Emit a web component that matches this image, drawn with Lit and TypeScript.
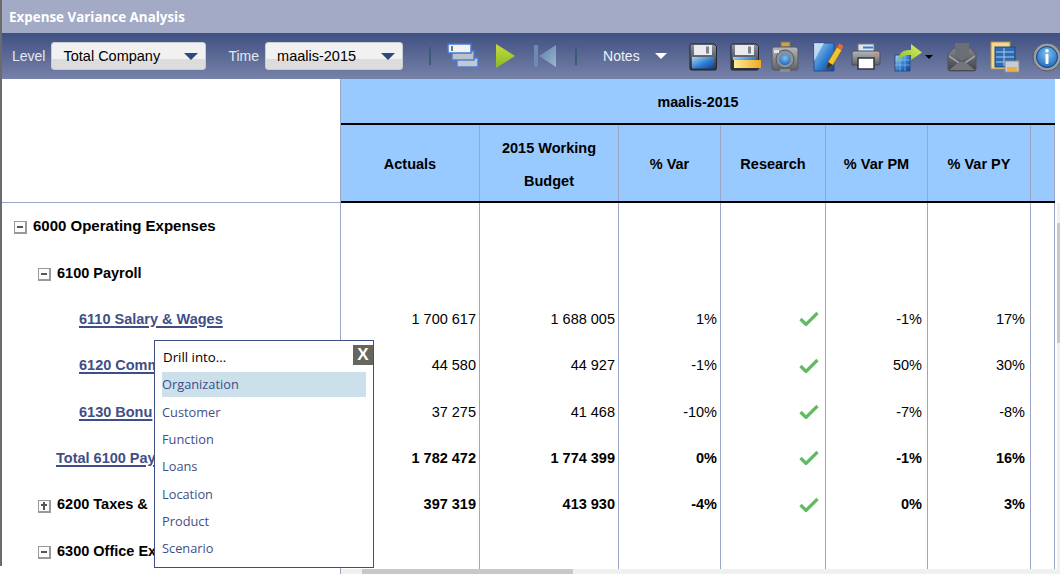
import { LitElement, html, css } from "lit";
import { customElement } from "lit/decorators.js";

const defs = html`<svg width="0" height="0" class="defs"><defs>
  <linearGradient id="gSave" x1="0" y1="0" x2="0" y2="1"><stop offset="0" stop-color="#8d93a3"/><stop offset="1" stop-color="#2c3038"/></linearGradient>
  <linearGradient id="gBlue" x1="0" y1="0" x2="1" y2="1"><stop offset="0" stop-color="#a9d4f2"/><stop offset=".55" stop-color="#2f7fd0"/><stop offset="1" stop-color="#0f3f96"/></linearGradient>
  <linearGradient id="gPlay" x1="0" y1="0" x2="0" y2="1"><stop offset="0" stop-color="#c6dc3a"/><stop offset="1" stop-color="#86b92a"/></linearGradient>
  <linearGradient id="gFirst" x1="0" y1="0" x2="1" y2="1"><stop offset="0" stop-color="#5d7ca4"/><stop offset="1" stop-color="#9ab9d6"/></linearGradient>
  <linearGradient id="gGrey" x1="0" y1="0" x2="0" y2="1"><stop offset="0" stop-color="#b5b8bf"/><stop offset="1" stop-color="#5e6068"/></linearGradient>
  <linearGradient id="gMail" x1="0" y1="0" x2="0" y2="1"><stop offset="0" stop-color="#85878e"/><stop offset="1" stop-color="#3d3f47"/></linearGradient>
  <linearGradient id="gArrow" x1="0" y1="1" x2="1" y2="0"><stop offset="0" stop-color="#7fbf3a"/><stop offset="1" stop-color="#e6ef58"/></linearGradient>
  <linearGradient id="gYellow" x1="0" y1="0" x2="1" y2="0"><stop offset="0" stop-color="#fff3a8"/><stop offset="1" stop-color="#f0a81e"/></linearGradient>
  <radialGradient id="gInfo" cx=".5" cy=".35" r=".7"><stop offset="0" stop-color="#7cc3f2"/><stop offset="1" stop-color="#1c63b8"/></radialGradient>
</defs></svg>`;

const ICONS = [
  { gap: 0, art: html`<svg class="ic" width="30" height="30" viewBox="0 0 30 30">
    <path d="M2 3.500Q2 2 3.500 2H26l2.500 2.500V26.500Q28.500 28 27 28H3.500Q2 28 2 26.500Z" fill="url(#gSave)" stroke="#23262c"/>
    <rect x="6" y="3" width="18" height="10" fill="#e9ebef"/><rect x="18" y="4.500" width="3" height="7" fill="#7d8189"/>
    <rect x="4" y="15" width="22" height="11.500" fill="url(#gBlue)"/></svg>` },
  { gap: 11, art: html`<svg class="ic" width="32" height="30" viewBox="0 0 32 30">
    <path d="M2 3.500Q2 2 3.500 2H27l2.500 2.500V26Q29.500 28 28 28H3.500Q2 28 2 26.500Z" fill="url(#gSave)" stroke="#23262c"/>
    <rect x="6" y="3" width="19" height="10" fill="#e9ebef"/><rect x="19" y="4.500" width="3" height="7" fill="#7d8189"/>
    <rect x="4" y="15" width="23" height="11" fill="url(#gBlue)"/>
    <rect x="2" y="18" width="30" height="8" fill="url(#gYellow)"/><rect x="2" y="18" width="3" height="8" fill="#333"/></svg>` },
  { gap: 9, art: html`<svg class="ic" width="30" height="32" viewBox="0 0 30 32">
    <rect x="11" y="1" width="9" height="5" fill="#c9a24a" stroke="#7c7460"/>
    <path d="M2 8Q2 6 4 6H26Q28 6 28 8V27Q28 29 26 29H4Q2 29 2 27Z" fill="url(#gGrey)" stroke="#55575e"/>
    <circle cx="15" cy="18" r="9" fill="#8d9098" stroke="#55575e"/><circle cx="15" cy="18.500" r="5.500" fill="url(#gInfo)"/>
    <rect x="4" y="9" width="5" height="3" fill="#e4e5e8"/><rect x="10" y="28" width="10" height="3" fill="#8a8c93"/></svg>` },
  { gap: 12, art: html`<svg class="ic" width="32" height="32" viewBox="0 0 32 32">
    <path d="M2 2H22V30H2Z" fill="url(#gBlue)" stroke="#274d92"/><path d="M2 2H12L2 20Z" fill="#dbe9f7" opacity=".7"/>
    <path d="M14 29l2-8L25 6l5 3-9 15Z" fill="#f2c230" stroke="#6b5a20" stroke-width=".6"/>
    <path d="M25 6l2.500-3.500 4 2.500-2 4Z" fill="#e8693a"/><path d="M14 29l2-8 5 3Z" fill="#3a3428"/></svg>` },
  { gap: 7, art: html`<svg class="ic" width="30" height="28" viewBox="0 0 30 28">
    <rect x="7" y="1" width="16" height="8" fill="#dfe6ee" stroke="#777"/><rect x="12" y="3.500" width="10" height="2" fill="#2e7fd0"/>
    <path d="M1 10Q1 8 3 8H27Q29 8 29 10V20Q29 22 27 22H1Z" fill="url(#gGrey)" stroke="#4d4f57"/>
    <rect x="23" y="10" width="4" height="2" fill="#e8893a"/>
    <rect x="7" y="15" width="16" height="11" fill="#fff" stroke="#33353b" stroke-width="1.500"/></svg>` },
  { gap: 13, art: html`<svg class="ic" width="30" height="30" viewBox="0 0 30 30">
    <path d="M1 13H16V29H1Z" fill="url(#gBlue)" stroke="#2a4c8c"/><path d="M1 18H16M1 23H16M6 13V29M11 13V29" stroke="#9dc4e8" stroke-width=".6"/>
    <path d="M4 19Q5 7 17 8V2l11 8.500L17 18V13Q9 12 4 19Z" fill="url(#gArrow)"/></svg>` },
  { gap: 22, art: html`<svg class="ic" width="32" height="30" viewBox="0 0 32 30">
    <path d="M2 12L8 6H24L30 12V27Q30 29 28 29H4Q2 29 2 27Z" fill="url(#gMail)" stroke="#53555c"/>
    <path d="M9 1H23V13L16 19 9 13Z" fill="#6c6e76"/><path d="M3 13L16 22 29 13V15L16 24 3 15Z" fill="#a2a4ab"/>
    <path d="M3 28L13 20H19L29 28Z" fill="#73757c"/></svg>` },
  { gap: 12, art: html`<svg class="ic" width="30" height="32" viewBox="0 0 30 32">
    <rect x="1" y="1" width="19" height="27" fill="#f4d98e" stroke="#a98f4a"/>
    <rect x="5" y="6" width="20" height="20" fill="#2f6bb5" stroke="#1f4a85"/>
    <path d="M6 11H24M6 16H24M6 21H24M14 7V25" stroke="#a8cdf0" stroke-width="1"/>
    <rect x="15" y="20" width="14" height="11" fill="#c9ccd2" stroke="#8a8c92"/><rect x="17" y="26" width="10" height="4" fill="#e9b04a"/></svg>` },
  { gap: 12, art: html`<svg class="ic" width="30" height="30" viewBox="0 0 30 30">
    <circle cx="15" cy="15" r="14" fill="#9a9da5" stroke="#55575e"/>
    <circle cx="15" cy="15" r="10.500" fill="url(#gInfo)" stroke="#123f7e"/>
    <circle cx="15" cy="8.800" r="1.800" fill="#fff"/><rect x="13.500" y="12" width="3" height="10" rx="1" fill="#fff"/></svg>` },
];

type Row = { label: string; lvl: 0 | 1 | 2 | 3; box?: "-" | "+"; link?: boolean; bold?: boolean; vals?: string[] };
const ROWS: Row[] = [
  { label: "6000 Operating Expenses", lvl: 0, box: "-", bold: true },
  { label: "6100 Payroll", lvl: 1, box: "-", bold: true },
  { label: "6110 Salary & Wages", lvl: 2, link: true, vals: ["1 700 617", "1 688 005", "1%", "-1%", "17%"] },
  { label: "6120 Comm", lvl: 2, link: true, vals: ["44 580", "44 927", "-1%", "50%", "30%"] },
  { label: "6130 Bonu", lvl: 2, link: true, vals: ["37 275", "41 468", "-10%", "-7%", "-8%"] },
  { label: "Total 6100 Pay", lvl: 3, link: true, bold: true, vals: ["1 782 472", "1 774 399", "0%", "-1%", "16%"] },
  { label: "6200 Taxes &", lvl: 1, box: "+", bold: true, vals: ["397 319", "413 930", "-4%", "0%", "3%"] },
  { label: "6300 Office Ex", lvl: 1, box: "-", bold: true },
];

const MENU = ["Organization", "Customer", "Function", "Loans", "Location", "Product", "Scenario"];
const check = html`<svg class="check" width="20" height="15" viewBox="0 0 20 15"><path d="M1.500 8L7 13.500 18.500 2" fill="none" stroke="#62bb62" stroke-width="3.200"/></svg>`;

@customElement("app-root")
export class AppRoot extends LitElement {
  static styles = css`
    :host { display: block; width: 1060px; height: 574px; overflow: hidden; position: relative; background: #fff;
      font-family: "Liberation Sans", Arial, sans-serif; color: #000; }
    .defs { position: absolute; }
    .frame { margin-left: 2px; width: 1058px; }
    .title { height: 33px; box-sizing: border-box; background: #a3aac5; color: #fff; font: bold 13.400px/35px "Open Sans", sans-serif; padding-left: 7px; }
    .toolbar { height: 46px; background: linear-gradient(#3f5082, #7782a8); display: flex; align-items: center; color: #e4e7f0; font-size: 14px; padding-left: 10px; white-space: nowrap; overflow: hidden; }
    .toolbar > * { flex: none; }
    .lbl { margin-right: 6px; }
    .sel { box-sizing: border-box; height: 28px; border: 1px solid #c9ccd3; border-radius: 3px; background: linear-gradient(#f1f1f1 60%, #dcdcdc 60%); color: #000; display: flex; align-items: center; justify-content: space-between; padding: 0 7px 0 11px; font-size: 14.500px; }
    .sel.a { width: 155px; margin-right: 22px; }
    .sel.b { width: 138px; }
    .arrow { width: 0; height: 0; border: 7px solid transparent; border-top: 7px solid #2c4a80; border-bottom: 0; }
    .sep { width: 2px; height: 18px; background: #3f5a78; }
    .sep.one { margin: 0 16px 0 26px; }
    .sep.two { margin-left: 18px; }
    .play { margin-left: 16px; }
    .first { margin-left: 18px; }
    .notes { margin-left: 26px; color: #f0f2f8; }
    .warrow { width: 0; height: 0; border: 6px solid transparent; border-top: 6px solid #fff; border-bottom: 0; margin-left: 15px; margin-right: 21px; }
    .ic { display: block; flex: none; filter: blur(0.35px); }
    .icons { display: flex; align-items: center; padding-top: 2px; }
    .slot { position: relative; flex: none; }
    .mini { position: absolute; left: 31px; top: 13px; width: 0; height: 0; border: 4px solid transparent; border-top: 4px solid #000; border-bottom: 0; }
    .hdr { display: flex; height: 124px; }
    .corner { box-sizing: border-box; width: 339px; border-right: 1px solid #9aa6c8; border-bottom: 1px solid #9aa6c8; }
    .hblock { box-sizing: border-box; width: 714px; background: #99caff; }
    .htop { box-sizing: border-box; height: 46px; padding-top: 2px; border-bottom: 2px solid #000; display: flex; align-items: center; justify-content: center; font: bold 14.300px "Liberation Sans", sans-serif; }
    .hcols { display: grid; grid-template-columns: 139px 139px 102px 105px 102px 103px 24px; height: 78px; box-sizing: border-box; border-bottom: 2px solid #000; }
    .hcols > div { border-right: 1px solid #9aa6c8; display: flex; align-items: center; justify-content: center; text-align: center; font-weight: bold; font-size: 14.500px; line-height: 33px; padding-top: 3px; }
    .row { display: flex; height: 46.350px; }
    .lab { box-sizing: border-box; width: 339px; flex: none; border-right: 1px solid #9aa6c8; display: flex; align-items: center; font-size: 14.500px; white-space: nowrap; overflow: hidden; }
    .l0 { padding-left: 12px; padding-bottom: 1px; font-size: 15px; } .l1 { padding-left: 36px; } .l2 { padding-left: 77px; } .l3 { padding-left: 54px; }
    .bold { font-weight: bold; }
    .link { font-weight: bold; color: #3f4f85; text-decoration: underline; text-decoration-thickness: 2px; text-underline-offset: 2px; }
    .box { box-sizing: border-box; width: 13px; height: 13px; border: 1px solid #999; border-bottom-width: 2px; border-right-width: 2px; margin-right: 6px; margin-top: 4px; position: relative; flex: none; background: #fbfbfb; }
    .box::before { content: ""; position: absolute; left: 2px; right: 2px; top: 3.500px; height: 2px; background: #555; }
    .box.plus::after { content: ""; position: absolute; top: 1px; bottom: 1px; left: 3.500px; width: 2px; background: #555; }
    .cells { display: grid; box-sizing: border-box; width: 714px; grid-template-columns: 139px 139px 102px 105px 102px 103px 24px; }
    .cells > div { border-right: 1px solid #9aa6c8; display: flex; align-items: center; justify-content: flex-end; padding-right: 3px; font-size: 14.500px; }
    .cells > div.r { padding-right: 5px; }
    .cells > div.c { padding-right: 6px; }
    .check { display: block; }
    .popup { position: absolute; left: 154px; top: 340px; width: 220px; height: 228px; box-sizing: border-box; background: #fff; border: 1px solid #3f4f85; font: 12.800px "Open Sans", sans-serif; color: #3f4f85; padding: 5px 7px 0 7px; z-index: 3; }
    .phead { color: #000; height: 26px; line-height: 23px; margin-left: 1px; font-size: 13.300px; }
    .item { height: 25px; line-height: 25px; margin-bottom: 2.200px; }
    .item.on { background: #cce0ec; margin-bottom: 3px; }
    .close { position: absolute; right: 0; top: 4px; width: 20px; height: 20px; background: #66665c; color: #fff; font: bold 17px/20px "Liberation Sans", sans-serif; text-align: center; }
    .hs { position: absolute; left: 341px; right: 0; bottom: 0; height: 5px; background: #f0f0f0; z-index: 2; }
    .hs i { display: block; margin-left: 21px; width: 211px; height: 100%; background: #c8c8c8; }
    .vs { position: absolute; right: 0; top: 203px; width: 3px; height: 371px; background: #f0f0f0; }
    .vs i { display: block; margin-top: 20px; height: 120px; background: #c8c8c8; }
    .leftedge { position: absolute; left: 0; top: 0; width: 2px; height: 566px; background: #6b6b6b; }
  `;

  render() {
    return html`${defs}
      <div class="leftedge"></div>
      <div class="frame">
        <div class="title">Expense Variance Analysis</div>
        <div class="toolbar">
          <span class="lbl">Level</span>
          <div class="sel a"><span>Total Company</span><span class="arrow"></span></div>
          <span class="lbl">Time</span>
          <div class="sel b"><span>maalis-2015</span><span class="arrow"></span></div>
          <span class="sep one"></span>
          <svg class="ic" width="32" height="26" viewBox="0 0 32 26">
            <rect x="10" y="15" width="21" height="9" fill="#c4c8d0" stroke="#4a7fd0" stroke-width="1.500"/>
            <rect x="5" y="8" width="22" height="9" fill="#bcc2cc" stroke="#4a7fd0" stroke-width="1.500"/>
            <rect x="1" y="1" width="23" height="9" fill="#f2f2f2" stroke="#3f78d8" stroke-width="1.500"/>
            <rect x="4" y="3" width="2" height="5" fill="#777"/></svg>
          <svg class="ic play" width="20" height="26" viewBox="0 0 20 26"><path d="M1 1L20 13 1 25Z" fill="url(#gPlay)"/></svg>
          <svg class="ic first" width="24" height="26" viewBox="0 0 24 26"><rect x="1" y="2" width="4" height="22" fill="#6c8bb2"/><path d="M23 2V24L6 13Z" fill="url(#gFirst)"/></svg>
          <span class="sep two"></span>
          <span class="notes">Notes</span><span class="warrow"></span>
          <div class="icons">
            ${ICONS.map((ic, i) => html`<div class="slot" style="margin-left:${ic.gap}px">${ic.art}${i === 5 ? html`<span class="mini"></span>` : ""}</div>`)}
          </div>
        </div>
        <div class="hdr">
          <div class="corner"></div>
          <div class="hblock">
            <div class="htop">maalis-2015</div>
            <div class="hcols">
              <div>Actuals</div><div>2015 Working<br />Budget</div><div>% Var</div><div>Research</div><div>% Var PM</div><div>% Var PY</div><div></div>
            </div>
          </div>
        </div>
        ${ROWS.map((r) => html`<div class="row">
          <div class="lab l${r.lvl} ${r.bold ? "bold" : ""}">
            ${r.box ? html`<span class="box ${r.box === "+" ? "plus" : ""}"></span>` : ""}
            <span class="${r.link ? "link" : ""}">${r.label}</span>
          </div>
          <div class="cells ${r.bold ? "bold" : ""}">
            ${r.vals
              ? html`<div>${r.vals[0]}</div><div>${r.vals[1]}</div><div>${r.vals[2]}</div><div class="c">${check}</div><div class="r">${r.vals[3]}</div><div class="r">${r.vals[4]}</div><div></div>`
              : html`<div></div><div></div><div></div><div></div><div></div><div></div><div></div>`}
          </div>
        </div>`)}
      </div>
      <div class="popup">
        <div class="phead">Drill into...</div>
        <div class="close">X</div>
        ${MENU.map((m, i) => html`<div class="item ${i === 0 ? "on" : ""}">${m}</div>`)}
      </div>
      <div class="hs"><i></i></div>
      <div class="vs"><i></i></div>`;
  }
}
